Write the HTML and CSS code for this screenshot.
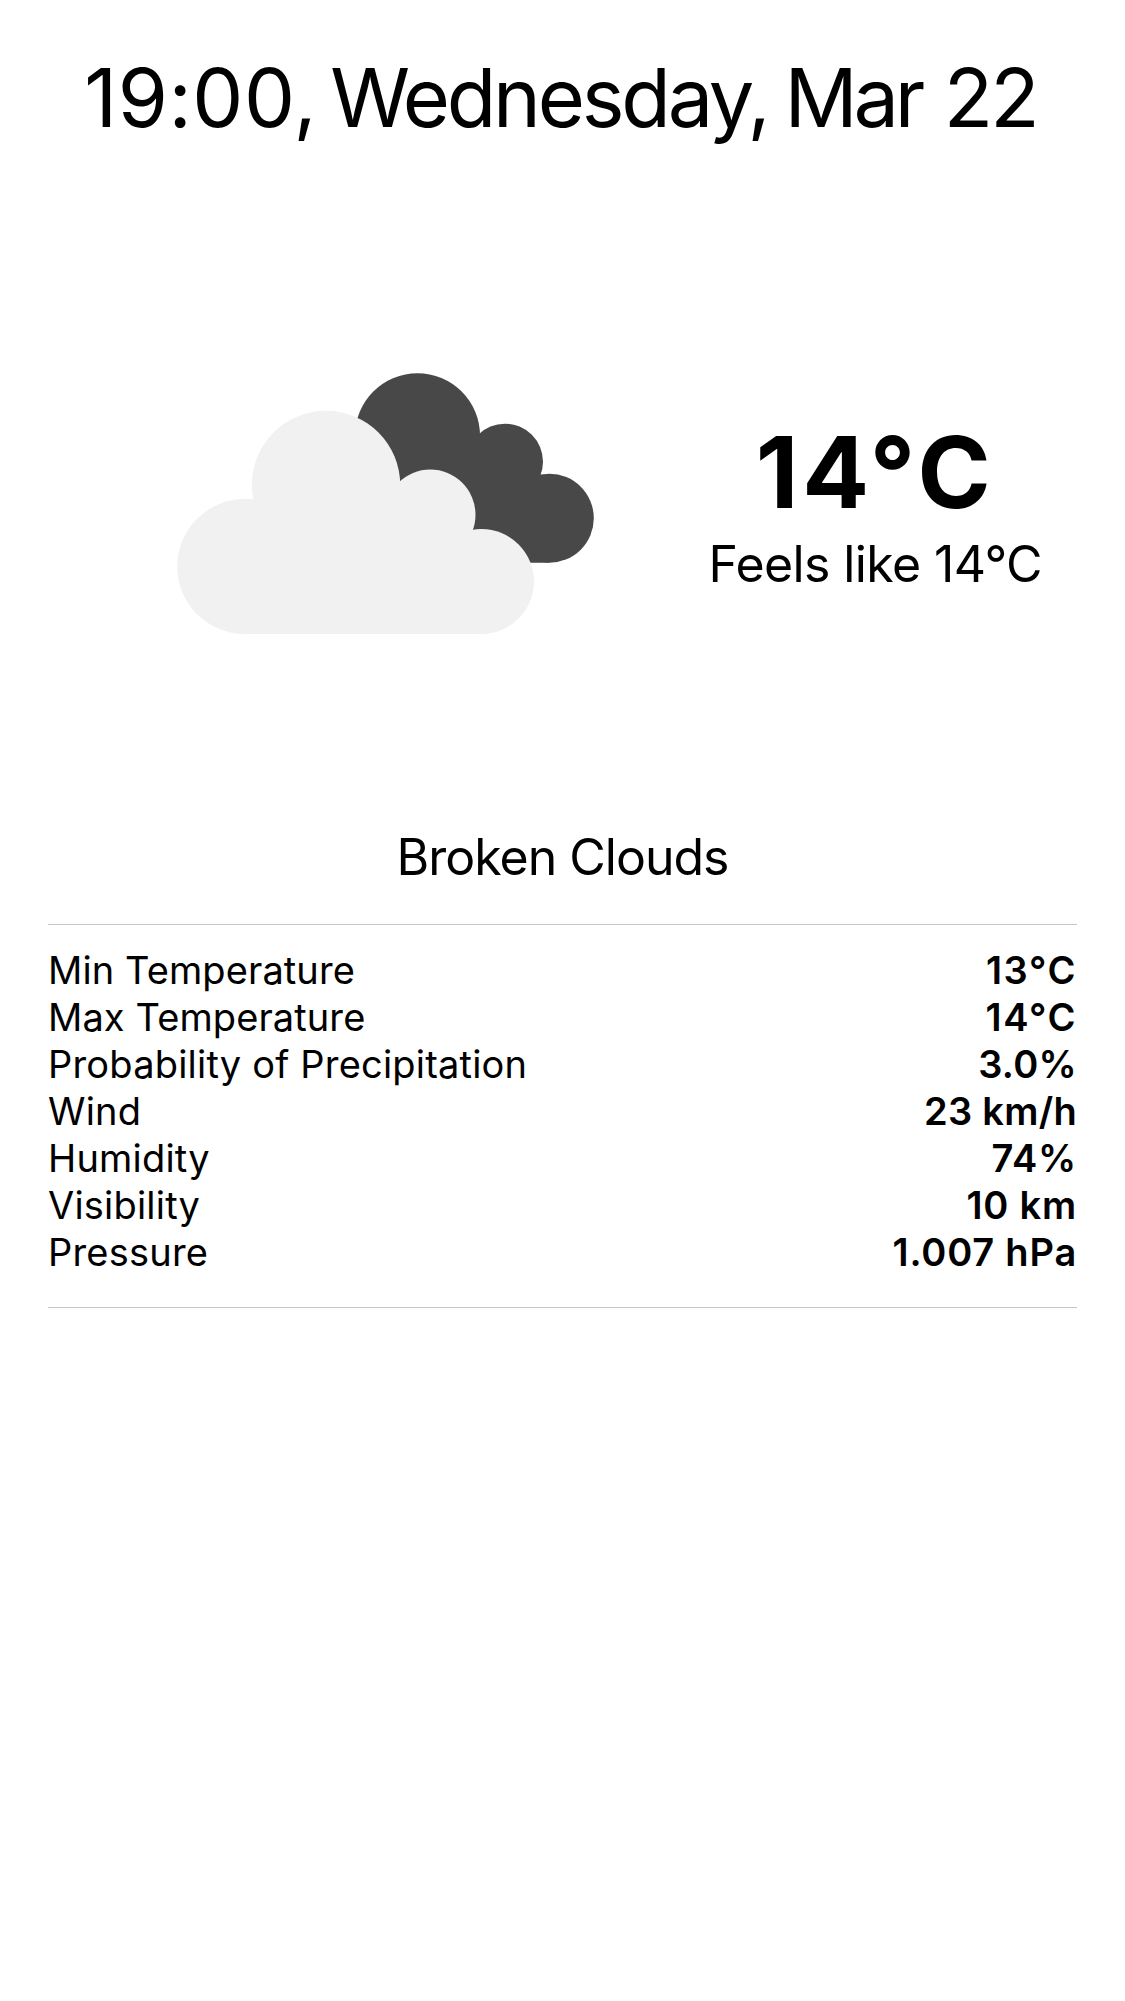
FILE: index.html
```html
<!DOCTYPE html>
<html lang="en">
<head>
<meta charset="utf-8">
<title>Weather</title>
<link rel="stylesheet" href="styles.css">
</head>
<body>
<main class="forecast">
  <h1 class="date"><span class="time">19:00,</span> <span class="weekday">Wednesday,</span> <span class="month">Mar</span> <span class="day">22</span></h1>
  <section class="summary">
    <svg class="clouds" viewBox="177 373 418 261" aria-hidden="true">
      <g fill="#484849">
        <circle cx="417.5" cy="435.7" r="62.5"/>
        <circle cx="505" cy="461.7" r="38"/>
        <circle cx="549.3" cy="518.2" r="44.5"/>
        <path d="M418 436H480L505 461L549.3 518V562.7H418Z"/>
      </g>
      <g fill="#f1f1f1">
        <circle cx="326" cy="485" r="74.2"/>
        <circle cx="244.7" cy="566.5" r="67.5"/>
        <circle cx="430.3" cy="514.7" r="45.2"/>
        <circle cx="481.5" cy="581.5" r="52.5"/>
        <path d="M245 499H326L400 485L430 514V531H472L481.5 540V634H245Z"/>
      </g>
    </svg>
    <div class="temperature">
      <strong class="degrees">14°C</strong>
      <span class="feels">Feels like 14°C</span>
    </div>
  </section>
  <h2 class="condition">Broken Clouds</h2>
  <dl class="details">
    <div class="row"><dt class="tight">Min Temperature</dt><dd class="wide">13°C</dd></div>
    <div class="row"><dt class="tight">Max Temperature</dt><dd class="wide">14°C</dd></div>
    <div class="row"><dt>Probability of Precipitation</dt><dd>3.0%</dd></div>
    <div class="row"><dt>Wind</dt><dd>23 km/h</dd></div>
    <div class="row"><dt>Humidity</dt><dd class="loose">74%</dd></div>
    <div class="row"><dt>Visibility</dt><dd class="loose">10 km</dd></div>
    <div class="row"><dt>Pressure</dt><dd class="loose">1.007 hPa</dd></div>
  </dl>
</main>
</body>
</html>
```
FILE: styles.css
```css
* { box-sizing: border-box; }
body { margin: 0; background: #fff; color: #000; font-family: Inter, "Liberation Sans", sans-serif; }
.forecast { min-height: 2001px; padding: 49px 48px 0; }
.date { margin: 0; padding-right: 4px; font-size: 81px; font-weight: 400; line-height: 99px; text-align: center; white-space: nowrap; }
.time { letter-spacing: 0.5px; }
.weekday { margin-left: -10px; letter-spacing: -3.2px; }
.month { margin-left: -6px; letter-spacing: -4.2px; }
.day { margin-left: 0; letter-spacing: -3px; }
.summary { display: flex; height: 657px; padding: 225px 35px 0 129px; justify-content: space-between; }
.clouds { width: 418px; height: 261px; flex: none; }
.temperature { display: flex; flex-direction: column; align-items: center; padding-top: 39px; white-space: nowrap; }
.degrees { font-size: 99px; font-weight: 700; line-height: 120px; letter-spacing: 4px; }
.feels { font-size: 50px; line-height: 64px; letter-spacing: -0.6px; }
.condition { margin: 0; height: 119px; padding-top: 20px; font-size: 50px; font-weight: 400; line-height: 64px; letter-spacing: -1px; text-align: center; }
.details { margin: 0; height: 384px; padding-top: 22px; border-top: 1px solid #c6c6c8; border-bottom: 1px solid #c6c6c8; font-size: 38px; }
.row { display: flex; justify-content: space-between; height: 47px; line-height: 47px; }
.row dt { letter-spacing: 0.2px; }
.row .tight { letter-spacing: 0.1px; }
.row dd { margin: 0; font-weight: 600; letter-spacing: 0.3px; }
.row .wide { letter-spacing: 1.6px; }
.row .loose { letter-spacing: 0.8px; }
```
